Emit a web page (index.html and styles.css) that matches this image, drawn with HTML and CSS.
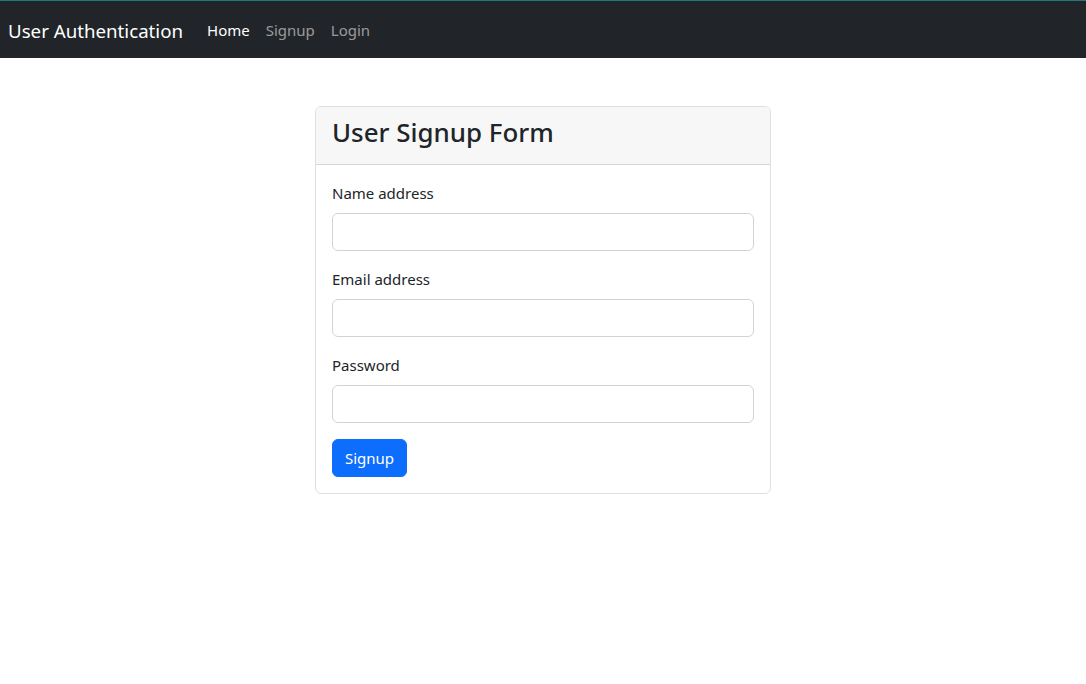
FILE: index.html
```html
<!DOCTYPE html>
<html lang="en">
<head>
<meta charset="utf-8">
<title>User Authentication</title>
<link rel="stylesheet" href="styles.css">
</head>
<body>
<nav class="navbar">
  <a class="brand" href="#">User Authentication</a>
  <ul class="nav">
    <li><a class="nav-link active" href="#">Home</a></li>
    <li><a class="nav-link" href="#">Signup</a></li>
    <li><a class="nav-link" href="#">Login</a></li>
  </ul>
</nav>
<main class="container">
  <div class="card">
    <div class="card-header">
      <h3 class="card-title">User Signup Form</h3>
    </div>
    <form class="card-body">
      <div class="field">
        <label class="form-label" for="name">Name address</label>
        <input class="form-control" type="text" id="name">
      </div>
      <div class="field">
        <label class="form-label" for="email">Email address</label>
        <input class="form-control" type="email" id="email">
      </div>
      <div class="field">
        <label class="form-label" for="password">Password</label>
        <input class="form-control" type="password" id="password">
      </div>
      <button class="btn" type="submit">Signup</button>
    </form>
  </div>
</main>
</body>
</html>
```
FILE: styles.css
```css
* { box-sizing: border-box; }
html, body { margin: 0; }
body {
  font-family: "Noto Sans", "Open Sans", sans-serif;
  font-size: 15px;
  line-height: 24px;
  color: #212529;
  background: #fff;
}
.navbar {
  display: flex;
  align-items: center;
  height: 58px;
  padding: 1px 8px 0;
  background: #212529;
  border-top: 1px solid #1f7b7b;
}
.brand {
  font-size: 18.7px;
  line-height: 30px;
  padding-top: 2px;
  color: #fff;
  text-decoration: none;
  margin-right: 16px;
}
.nav {
  display: flex;
  list-style: none;
  margin: 0;
  padding: 0;
}
.nav-link {
  display: block;
  padding: 8px;
  color: rgba(255, 255, 255, 0.55);
  text-decoration: none;
}
.nav-link.active { color: #fff; }
.container {
  display: flex;
  justify-content: center;
  padding-top: 48px;
}
.card {
  width: 456px;
  border: 1px solid rgba(0, 0, 0, 0.125);
  border-radius: 6px;
  overflow: hidden;
}
.card-header {
  padding: 8px 16px;
  background: #f7f7f7;
  border-bottom: 1px solid rgba(0, 0, 0, 0.125);
}
.card-title {
  margin: 0 0 7px;
  padding-top: 1px;
  font-size: 25.9px;
  line-height: 33px;
  font-weight: 500;
}
.card-body {
  display: flex;
  flex-direction: column;
  align-items: flex-start;
  padding: 16px;
}
.field {
  width: 100%;
  margin-bottom: 16px;
}
.form-label {
  display: block;
  margin-bottom: 8px;
}
.form-control {
  display: block;
  width: 100%;
  height: 38px;
  padding: 6px 12px;
  font: inherit;
  border: 1px solid #ced4da;
  border-radius: 6px;
  background: #fff;
}
.btn {
  height: 38px;
  padding: 6px 12px;
  font: inherit;
  color: #fff;
  background: #0d6efd;
  border: 1px solid #0d6efd;
  border-radius: 6px;
}
```
